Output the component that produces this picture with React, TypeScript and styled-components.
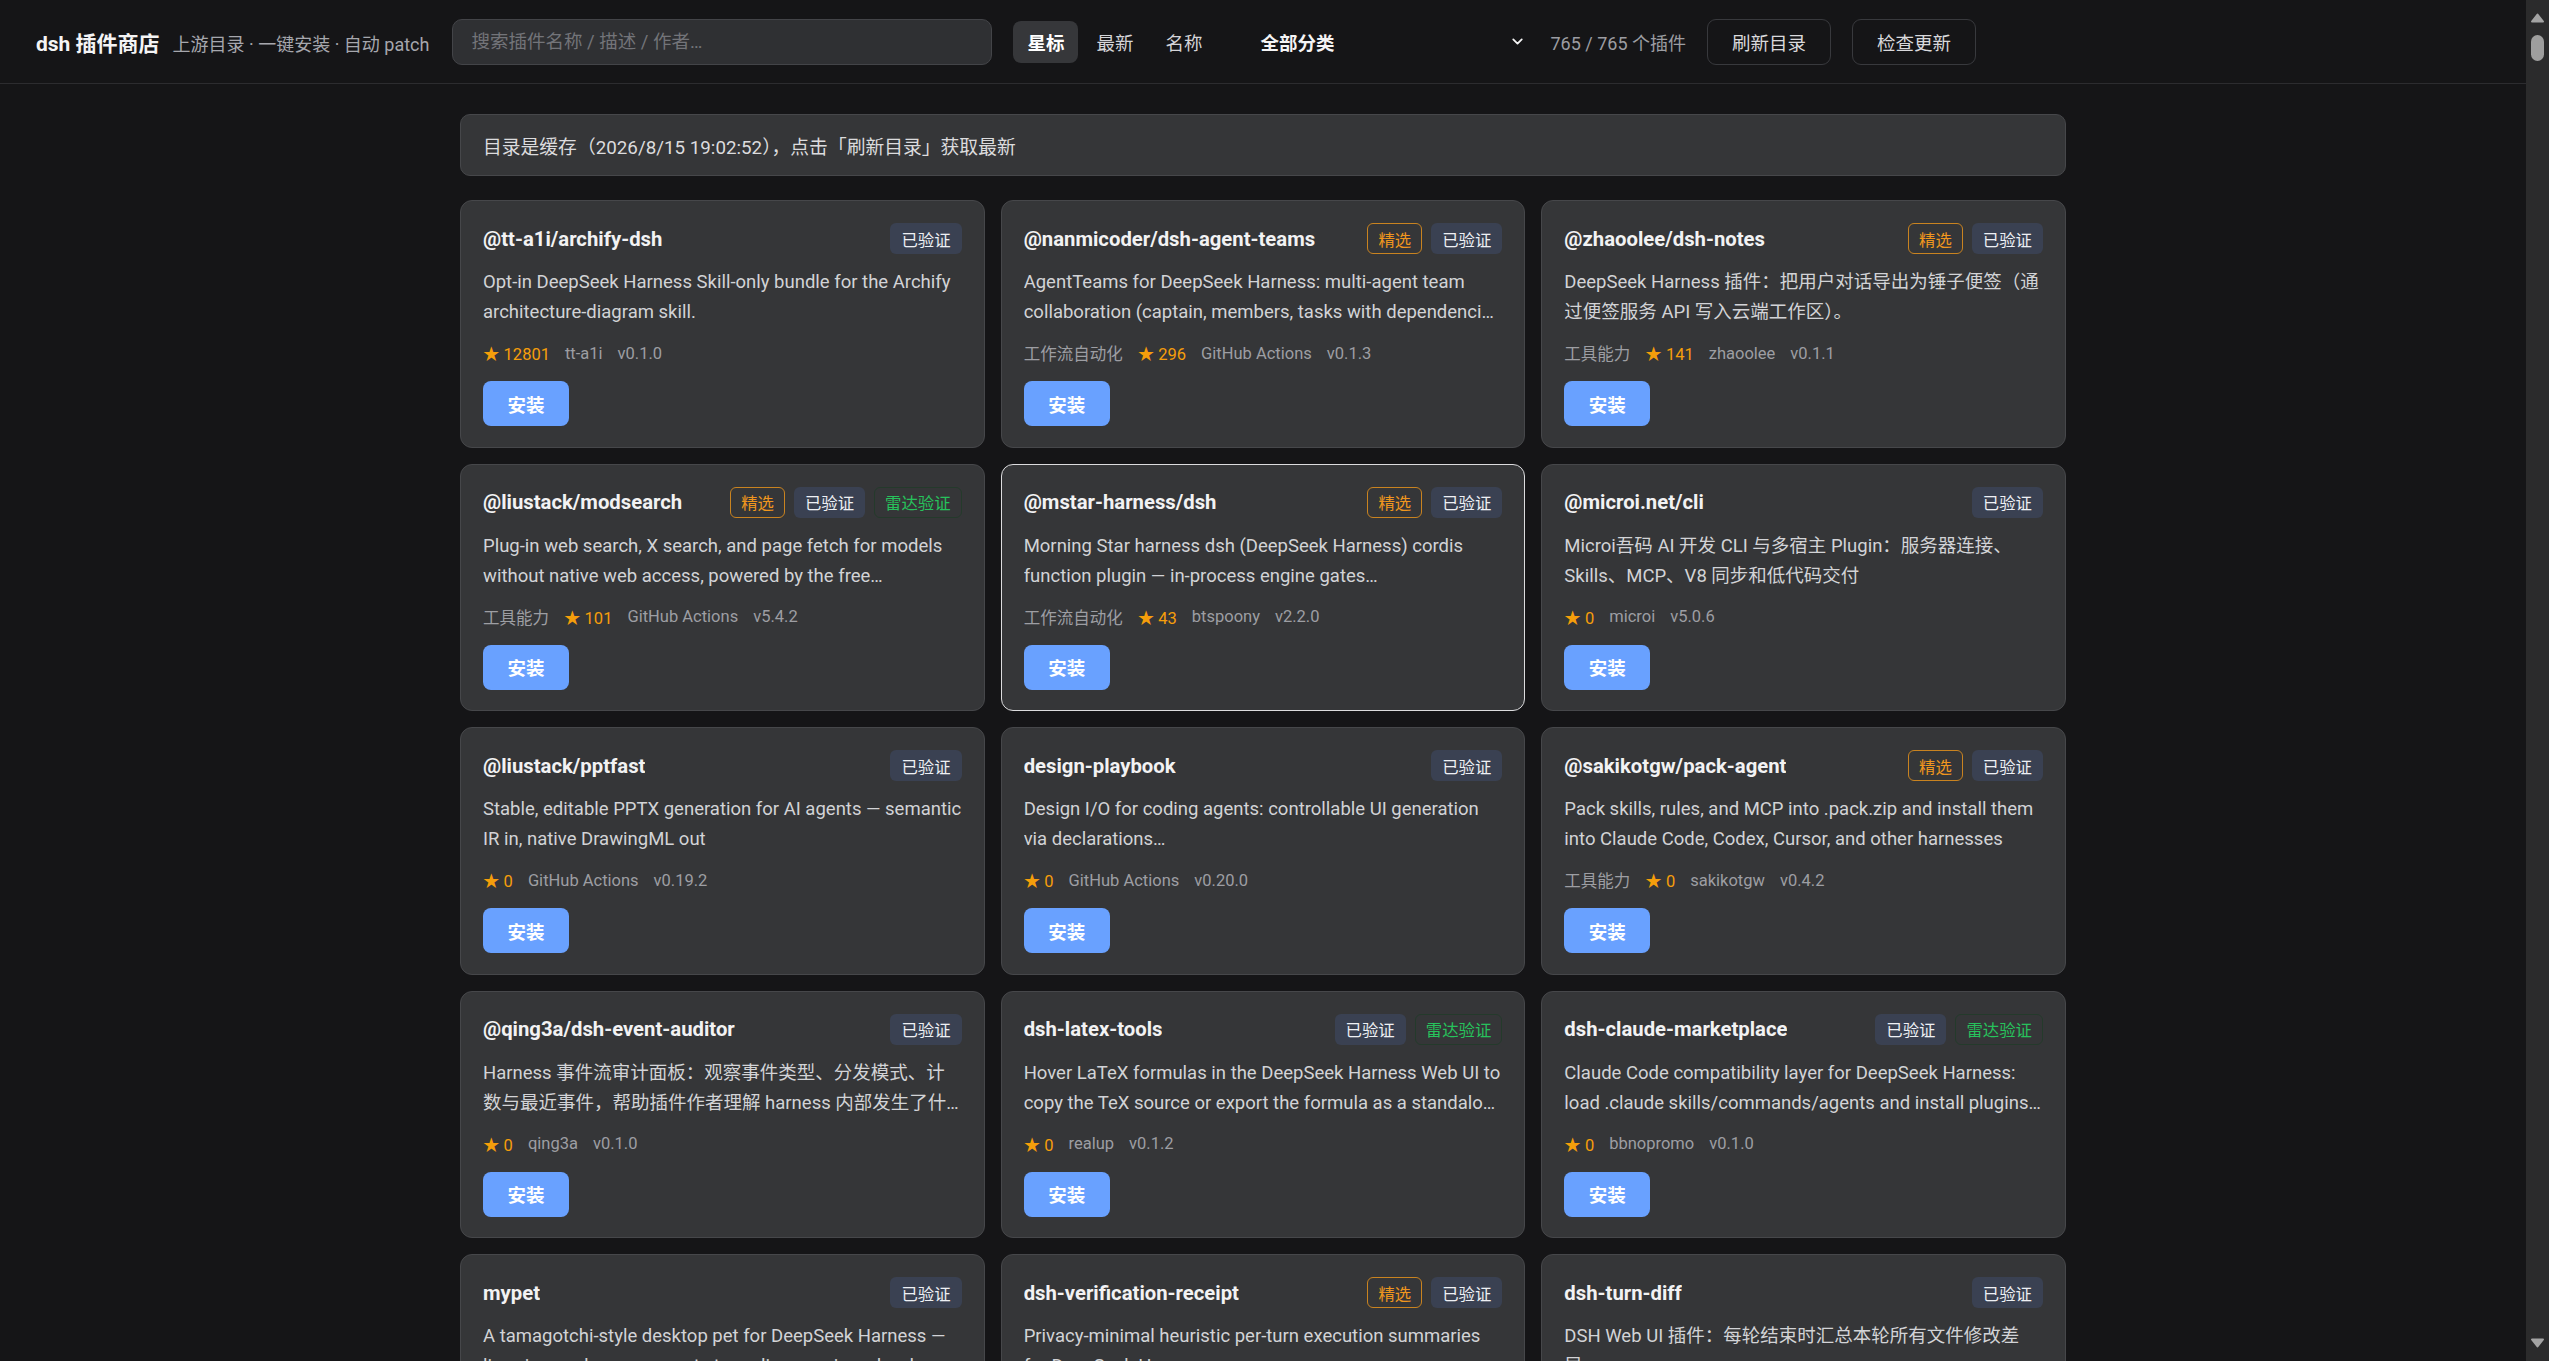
import React from "react";
import styled, { createGlobalStyle, css } from "styled-components";
import { ChevronDown } from "lucide-react";

const RAIL = 23;

const GlobalStyle = createGlobalStyle`
  html, body {
    margin: 0;
    background: #151517;
  }
  body {
    font-family: Roboto, "Noto Sans CJK SC", sans-serif;
    color: #e6e6e6;
    padding-right: ${RAIL}px;
  }
  * {
    box-sizing: border-box;
  }
  html::-webkit-scrollbar {
    display: none;
  }
`;

const Header = styled.header`
  position: sticky;
  top: 0;
  z-index: 5;
  height: 84px;
  display: flex;
  align-items: center;
  gap: 21px;
  padding: 0 36px;
  background: #151517;
  border-bottom: 1px solid #2c2c2f;
`;

const Brand = styled.div`
  display: flex;
  align-items: baseline;
  gap: 13px;
  margin-right: 2px;
  h1 {
    margin: 0;
    font-size: 21px;
    font-weight: 700;
    color: #f4f4f5;
  }
  span {
    font-size: 18px;
    color: #a6a7ad;
  }
`;

const Search = styled.input`
  width: 540px;
  height: 46px;
  padding: 0 18px;
  border-radius: 10px;
  border: 1px solid #434448;
  background: #2f3033;
  color: #e6e6e6;
  font: inherit;
  font-size: 18.5px;
  outline: none;
  &::placeholder {
    color: #737479;
  }
`;

const SortGroup = styled.div`
  display: flex;
  gap: 4px;
`;

const SortButton = styled.button<{ $active?: boolean }>`
  height: 42px;
  padding: 0 14px;
  border: none;
  border-radius: 8px;
  font: inherit;
  font-size: 18.5px;
  cursor: pointer;
  background: transparent;
  color: #d4d4d8;
  ${(p) =>
    p.$active &&
    css`
      background: #36373a;
      color: #ffffff;
      font-weight: 600;
    `}
`;

const CategorySelect = styled.div`
  width: 292px;
  height: 42px;
  padding: 0 4px 0 23px;
  display: flex;
  align-items: center;
  justify-content: space-between;
  font-size: 18.5px;
  font-weight: 600;
  color: #f4f4f5;
  cursor: pointer;
`;

const Count = styled.span`
  font-size: 18px;
  color: #9c9da2;
`;

const HeaderButton = styled.button`
  width: 124px;
  height: 46px;
  border: 1px solid #38393d;
  border-radius: 9px;
  background: transparent;
  color: #d9d9dc;
  font: inherit;
  font-size: 18.5px;
  cursor: pointer;
`;

const Main = styled.main`
  max-width: 1606px;
  margin: 0 auto;
  padding-top: 30px;
`;

const Notice = styled.div`
  height: 62px;
  display: flex;
  align-items: center;
  padding: 0 22px;
  margin-bottom: 24px;
  background: #353638;
  border: 1px solid #46474a;
  border-radius: 10px;
  font-size: 18.8px;
  color: #dcdcde;
`;

const Grid = styled.div`
  display: grid;
  grid-template-columns: repeat(3, 1fr);
  gap: 16px;
`;

const Card = styled.article<{ $active?: boolean }>`
  display: flex;
  flex-direction: column;
  padding: 22px 22px 20.5px;
  background: #353638;
  border: 1px solid ${(p) => (p.$active ? "#dcdcde" : "#46474a")};
  border-radius: 12px;
`;

const CardHead = styled.div`
  height: 31px;
  display: flex;
  align-items: center;
  justify-content: space-between;
  gap: 10px;
`;

const Name = styled.h3`
  margin: 0;
  font-size: 20.3px;
  font-weight: 700;
  color: #f2f2f3;
  white-space: nowrap;
  overflow: hidden;
  text-overflow: ellipsis;
`;

const Badges = styled.div`
  display: flex;
  gap: 9px;
  flex-shrink: 0;
`;

type BadgeKind = "featured" | "verified" | "radar";

const Badge = styled.span<{ $kind: BadgeKind }>`
  height: 31px;
  padding: 0 10px;
  display: inline-flex;
  align-items: center;
  border-radius: 6px;
  font-size: 16.4px;
  border: 1px solid transparent;
  ${(p) =>
    p.$kind === "verified" &&
    css`
      background: #3a4152;
      color: #eef0f4;
    `}
  ${(p) =>
    p.$kind === "featured" &&
    css`
      border-color: #c98320;
      color: #f0961e;
    `}
  ${(p) =>
    p.$kind === "radar" &&
    css`
      border-color: #243a2b;
      color: #27c25c;
    `}
`;

const Desc = styled.p`
  margin: 13px 0 0;
  height: 60px;
  font-size: 18.5px;
  line-height: 30px;
  color: #d2d3d6;
  display: -webkit-box;
  -webkit-line-clamp: 2;
  -webkit-box-orient: vertical;
  overflow: hidden;
`;

const Meta = styled.div`
  margin-top: 14px;
  height: 24px;
  display: flex;
  align-items: center;
  gap: 15px;
  font-size: 16.5px;
  color: #9d9ea3;
`;

const Stars = styled.span`
  color: #f59e0b;
`;

const InstallButton = styled.button`
  margin-top: 16px;
  width: 86px;
  height: 45px;
  border: none;
  border-radius: 8px;
  background: #69a1ff;
  color: #ffffff;
  font: inherit;
  font-size: 18.5px;
  font-weight: 600;
  cursor: pointer;
`;

const Spacer = styled.div`
  width: 100%;
`;

/* custom scroll rail, drawn over the right edge of the window */
const Rail = styled.div`
  position: fixed;
  top: 0;
  right: 0;
  bottom: 0;
  width: ${RAIL}px;
  z-index: 10;
  display: flex;
  flex-direction: column;
  background: #2b2b2c;
`;

const RailArrow = styled.div<{ $down?: boolean }>`
  height: 35px;
  display: flex;
  justify-content: center;
  align-items: ${(p) => (p.$down ? "flex-end" : "flex-start")};
  padding: ${(p) => (p.$down ? "0 0 13px" : "13px 0 0")};
  svg {
    display: block;
  }
`;

const RailTrack = styled.div`
  flex: 1;
  display: flex;
  justify-content: center;
`;

const RailThumb = styled.div`
  width: 13px;
  border-radius: 7px;
  background: #9e9e9e;
`;

type Plugin = {
  name: string;
  desc: string;
  badges: BadgeKind[];
  category?: string;
  stars: number;
  author: string;
  version: string;
  active?: boolean;
};

const badgeLabel: Record<BadgeKind, string> = {
  featured: "精选",
  verified: "已验证",
  radar: "雷达验证",
};

const plugins: Plugin[] = [
  {
    name: "@tt-a1i/archify-dsh",
    desc: "Opt-in DeepSeek Harness Skill-only bundle for the Archify architecture-diagram skill.",
    badges: ["verified"],
    stars: 12801,
    author: "tt-a1i",
    version: "v0.1.0",
  },
  {
    name: "@nanmicoder/dsh-agent-teams",
    desc: "AgentTeams for DeepSeek Harness: multi-agent team collaboration (captain, members, tasks with dependenci…",
    badges: ["featured", "verified"],
    category: "工作流自动化",
    stars: 296,
    author: "GitHub Actions",
    version: "v0.1.3",
  },
  {
    name: "@zhaoolee/dsh-notes",
    desc: "DeepSeek Harness 插件：把用户对话导出为锤子便签（通过便签服务 API 写入云端工作区）。",
    badges: ["featured", "verified"],
    category: "工具能力",
    stars: 141,
    author: "zhaoolee",
    version: "v0.1.1",
  },
  {
    name: "@liustack/modsearch",
    desc: "Plug-in web search, X search, and page fetch for models without native web access, powered by the free…",
    badges: ["featured", "verified", "radar"],
    category: "工具能力",
    stars: 101,
    author: "GitHub Actions",
    version: "v5.4.2",
  },
  {
    name: "@mstar-harness/dsh",
    desc: "Morning Star harness dsh (DeepSeek Harness) cordis function plugin — in-process engine gates…",
    badges: ["featured", "verified"],
    category: "工作流自动化",
    stars: 43,
    author: "btspoony",
    version: "v2.2.0",
    active: true,
  },
  {
    name: "@microi.net/cli",
    desc: "Microi吾码 AI 开发 CLI 与多宿主 Plugin：服务器连接、Skills、MCP、V8 同步和低代码交付",
    badges: ["verified"],
    stars: 0,
    author: "microi",
    version: "v5.0.6",
  },
  {
    name: "@liustack/pptfast",
    desc: "Stable, editable PPTX generation for AI agents — semantic IR in, native DrawingML out",
    badges: ["verified"],
    stars: 0,
    author: "GitHub Actions",
    version: "v0.19.2",
  },
  {
    name: "design-playbook",
    desc: "Design I/O for coding agents: controllable UI generation via declarations…",
    badges: ["verified"],
    stars: 0,
    author: "GitHub Actions",
    version: "v0.20.0",
  },
  {
    name: "@sakikotgw/pack-agent",
    desc: "Pack skills, rules, and MCP into .pack.zip and install them into Claude Code, Codex, Cursor, and other harnesses",
    badges: ["featured", "verified"],
    category: "工具能力",
    stars: 0,
    author: "sakikotgw",
    version: "v0.4.2",
  },
  {
    name: "@qing3a/dsh-event-auditor",
    desc: "Harness 事件流审计面板：观察事件类型、分发模式、计数与最近事件，帮助插件作者理解 harness 内部发生了什…",
    badges: ["verified"],
    stars: 0,
    author: "qing3a",
    version: "v0.1.0",
  },
  {
    name: "dsh-latex-tools",
    desc: "Hover LaTeX formulas in the DeepSeek Harness Web UI to copy the TeX source or export the formula as a standalo…",
    badges: ["verified", "radar"],
    stars: 0,
    author: "realup",
    version: "v0.1.2",
  },
  {
    name: "dsh-claude-marketplace",
    desc: "Claude Code compatibility layer for DeepSeek Harness: load .claude skills/commands/agents and install plugins…",
    badges: ["verified", "radar"],
    stars: 0,
    author: "bbnopromo",
    version: "v0.1.0",
  },
  {
    name: "mypet",
    desc: "A tamagotchi-style desktop pet for DeepSeek Harness — lives in your browser, reacts to coding sessions, levels up…",
    badges: ["verified"],
    stars: 0,
    author: "mypet",
    version: "v0.1.0",
  },
  {
    name: "dsh-verification-receipt",
    desc: "Privacy-minimal heuristic per-turn execution summaries for DeepSeek Harness.",
    badges: ["featured", "verified"],
    stars: 0,
    author: "GitHub Actions",
    version: "v0.1.0",
  },
  {
    name: "dsh-turn-diff",
    desc: "DSH Web UI 插件：每轮结束时汇总本轮所有文件修改差异。",
    badges: ["verified"],
    stars: 0,
    author: "dsh",
    version: "v0.1.0",
  },
];

const TOTAL = 765;
const ROW_HEIGHT = 263.5;
const LIST_TOP = 200;

const PluginCard = ({ p }: { p: Plugin }) => (
  <Card $active={p.active}>
    <CardHead>
      <Name>{p.name}</Name>
      <Badges>
        {p.badges.map((b) => (
          <Badge key={b} $kind={b}>
            {badgeLabel[b]}
          </Badge>
        ))}
      </Badges>
    </CardHead>
    <Desc>{p.desc}</Desc>
    <Meta>
      {p.category && <span>{p.category}</span>}
      <Stars>★ {p.stars}</Stars>
      <span>{p.author}</span>
      <span>{p.version}</span>
    </Meta>
    <InstallButton>安装</InstallButton>
  </Card>
);

const Triangle = ({ down }: { down?: boolean }) => (
  <svg width="15" height="10" viewBox="0 0 15 10">
    <path
      d={down ? "M2 1.5 H13 L7.5 8.5 Z" : "M7.5 1.5 L13 8.5 H2 Z"}
      fill="#a3a3a3"
      stroke="#a3a3a3"
      strokeWidth="2"
      strokeLinejoin="round"
    />
  </svg>
);

const App = () => {
  const restRows = Math.ceil((TOTAL - plugins.length) / 3);
  const contentHeight = LIST_TOP + Math.ceil(TOTAL / 3) * ROW_HEIGHT;
  const viewport = typeof window !== "undefined" ? window.innerHeight : 1361;
  const trackLength = viewport - 70;
  const thumb = Math.max(20, (trackLength * viewport) / contentHeight);

  return (
    <>
      <GlobalStyle />
      <Header>
        <Brand>
          <h1>dsh 插件商店</h1>
          <span>上游目录 · 一键安装 · 自动 patch</span>
        </Brand>
        <Search placeholder="搜索插件名称 / 描述 / 作者…" />
        <SortGroup>
          <SortButton $active>星标</SortButton>
          <SortButton>最新</SortButton>
          <SortButton>名称</SortButton>
        </SortGroup>
        <CategorySelect>
          全部分类
          <ChevronDown size={17} strokeWidth={2.5} />
        </CategorySelect>
        <Count>765 / 765 个插件</Count>
        <HeaderButton>刷新目录</HeaderButton>
        <HeaderButton>检查更新</HeaderButton>
      </Header>
      <Main>
        <Notice>目录是缓存（2026/8/15 19:02:52），点击「刷新目录」获取最新</Notice>
        <Grid>
          {plugins.map((p) => (
            <PluginCard key={p.name} p={p} />
          ))}
        </Grid>
        <Spacer style={{ height: restRows * ROW_HEIGHT }} />
      </Main>
      <Rail>
        <RailArrow>
          <Triangle />
        </RailArrow>
        <RailTrack>
          <RailThumb style={{ height: thumb }} />
        </RailTrack>
        <RailArrow $down>
          <Triangle down />
        </RailArrow>
      </Rail>
    </>
  );
};

export default App;
